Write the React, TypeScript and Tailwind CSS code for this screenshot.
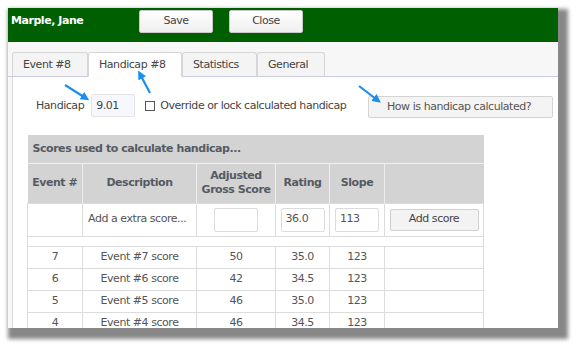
import React from "react";

type ScoreRow = {
  event: number;
  description: string;
  gross: number;
  rating: string;
  slope: number;
};

const scores: ScoreRow[] = [
  { event: 7, description: "Event #7 score", gross: 50, rating: "35.0", slope: 123 },
  { event: 6, description: "Event #6 score", gross: 42, rating: "34.5", slope: 123 },
  { event: 5, description: "Event #5 score", gross: 46, rating: "35.0", slope: 123 },
  { event: 4, description: "Event #4 score", gross: 46, rating: "34.5", slope: 123 },
];

const tabs = [
  { label: "Event #8", width: "w-[76px]" },
  { label: "Handicap #8", width: "w-[94px]" },
  { label: "Statistics", width: "w-[75px]" },
  { label: "General", width: "w-[68px]" },
];

const Arrows = () => (
  <svg className="absolute inset-0 pointer-events-none" width={576} height={348} viewBox="0 0 576 348">
    <defs>
      <marker id="head" markerWidth="4" markerHeight="4" refX="1.2" refY="2" orient="auto" markerUnits="strokeWidth">
        <path d="M0,0 L4,2 L0,4 Z" fill="#1b8ff0" />
      </marker>
    </defs>
    <line x1="65" y1="85" x2="84" y2="97" stroke="#1b8ff0" strokeWidth="2.2" markerEnd="url(#head)" />
    <line x1="150" y1="93" x2="141" y2="76" stroke="#1b8ff0" strokeWidth="2.2" markerEnd="url(#head)" />
    <line x1="359" y1="86" x2="376" y2="99" stroke="#1b8ff0" strokeWidth="2.2" markerEnd="url(#head)" />
  </svg>
);

const App = () => {
  return (
    <div className="relative w-[576px] h-[348px] bg-white overflow-hidden p-2 font-['DejaVu_Sans',sans-serif] text-[11px] tracking-[-0.45px] text-[#444]">
      <div className="w-[550px] h-[320px] overflow-hidden bg-[#f7f7f7] shadow-[5px_6px_4px_5px_#888]">
        {/* header */}
        <div className="h-[34px] bg-[#005f00] flex items-start pt-[2px]">
          <div className="w-[131px] h-[23px] flex items-center pl-[3px] text-white font-bold text-[11px]">
            Marple, Jane
          </div>
          <button className="w-[74px] h-[23px] bg-gradient-to-b from-white to-[#efefef] border border-[#c8c8c8] rounded-[2px] text-[#444] text-[11px]">
            Save
          </button>
          <button className="ml-[16px] w-[74px] h-[23px] bg-gradient-to-b from-white to-[#efefef] border border-[#c8c8c8] rounded-[2px] text-[#444] text-[11px]">
            Close
          </button>
        </div>

        {/* tabs */}
        <div className="h-[35px] pt-[10px] pl-[4px] flex items-end border-b border-[#c9cce0]">
          {tabs.map((tab) => {
            const active = tab.label === "Handicap #8";
            return (
              <div
                key={tab.label}
                className={`${tab.width} h-[25px] -mb-px flex items-center pl-[10px] pt-[2px] border border-[#d6d6d6] rounded-t-[3px] ${
                  active ? "bg-white border-b-white" : "bg-[#f4f4f4] border-b-[#c9cce0]"
                }`}
              >
                {tab.label}
              </div>
            );
          })}
        </div>

        {/* panel */}
        <div className="ml-[4px] h-full bg-white border-l border-[#d8d8d8]">
          <div className="pt-[17px] pl-[23px] flex items-start">
            <div className="h-[23px] flex items-center pt-[2px]">Handicap</div>
            <div className="ml-[7px] w-[44px] h-[23px] flex items-center pl-[4px] pt-[1px] bg-[#f7f8fe] border border-[#e3e3e8] rounded-[2px]">
              9.01
            </div>
            <div className="ml-[10px] h-[23px] flex items-center pt-[1px]">
              <span className="w-[10px] h-[10px] border border-[#555] bg-white" />
              <span className="ml-[5px]">Override or lock calculated handicap</span>
            </div>
            <button className="ml-auto mr-[5px] mt-[2px] w-[185px] h-[22px] pl-[18px] text-left bg-[#f4f4f4] border border-[#d4d4d4] rounded-[2px] text-[#555]">
              How is handicap calculated?
            </button>
          </div>

          <table className="ml-[14px] mt-[17px] w-[456px] table-fixed border-collapse text-[#555]">
            <colgroup>
              <col className="w-[55px]" />
              <col className="w-[114px]" />
              <col className="w-[79px]" />
              <col className="w-[54px]" />
              <col className="w-[55px]" />
              <col className="w-[99px]" />
            </colgroup>
            <thead>
              <tr className="h-[28px] bg-[#d3d3d3] border-b border-[#f0f0f0]">
                <th colSpan={6} className="text-left pl-[5px] font-bold text-[#555b63]">
                  Scores used to calculate handicap...
                </th>
              </tr>
              <tr className="h-[40px] bg-[#d3d3d3] font-bold text-[#555b63]">
                <th className="border-r border-[#eeeeee]">Event #</th>
                <th className="border-r border-[#eeeeee]">Description</th>
                <th className="border-r border-[#eeeeee] leading-[14px]">
                  Adjusted
                  <br />
                  Gross Score
                </th>
                <th className="border-r border-[#eeeeee]">Rating</th>
                <th className="border-r border-[#eeeeee]">Slope</th>
                <th></th>
              </tr>
            </thead>
            <tbody>
              <tr className="h-[33px] border border-[#dcdcdc]">
                <td className="border-r border-[#dcdcdc]"></td>
                <td className="border-r border-[#dcdcdc] pl-[5px]">Add a extra score...</td>
                <td className="border-r border-[#dcdcdc]">
                  <div className="mx-auto w-[44px] h-[24px] border border-[#dcdcdc] rounded-[2px]" />
                </td>
                <td className="border-r border-[#dcdcdc]">
                  <div className="mx-auto w-[44px] h-[24px] flex items-center pl-[4px] border border-[#dcdcdc] rounded-[2px]">
                    36.0
                  </div>
                </td>
                <td className="border-r border-[#dcdcdc]">
                  <div className="mx-auto w-[44px] h-[24px] flex items-center pl-[4px] border border-[#dcdcdc] rounded-[2px]">
                    113
                  </div>
                </td>
                <td>
                  <button className="mx-auto block w-[89px] h-[22px] bg-[#f3f3f3] border border-[#d0d0d0] rounded-[2px] text-[#444]">
                    Add score
                  </button>
                </td>
              </tr>
              <tr className="h-[10px] border border-[#dcdcdc]">
                <td colSpan={6}></td>
              </tr>
              {scores.map((row) => (
                <tr key={row.event} className="h-[22px] border border-[#dcdcdc] text-center">
                  <td className="border-r border-[#dcdcdc]">{row.event}</td>
                  <td className="border-r border-[#dcdcdc]">{row.description}</td>
                  <td className="border-r border-[#dcdcdc]">{row.gross}</td>
                  <td className="border-r border-[#dcdcdc]">{row.rating}</td>
                  <td className="border-r border-[#dcdcdc]">{row.slope}</td>
                  <td></td>
                </tr>
              ))}
            </tbody>
          </table>
        </div>
      </div>
      <Arrows />
    </div>
  );
};

export default App;
